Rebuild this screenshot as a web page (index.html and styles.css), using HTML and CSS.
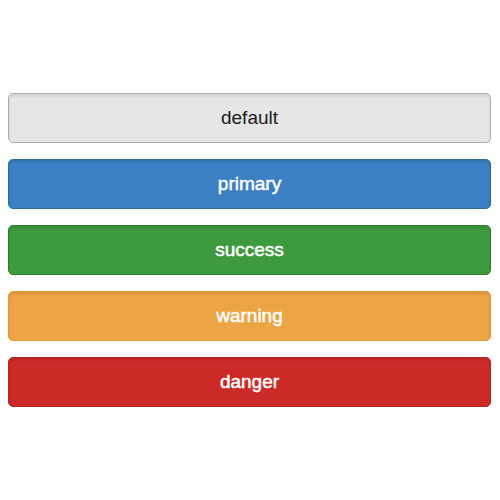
FILE: index.html
```html
<!DOCTYPE html>
<html lang="en">

<head>
    <meta charset="UTF-8">
    <meta name="viewport" content="width=device-width, initial-scale=1.0">
    <title>Buttons</title>
    <link rel="stylesheet" href="styles.css">
</head>

<body>

    <div id="button-list">
        <button class="btn btn-default">default</button>
        <button class="btn btn-primary">primary</button>
        <button class="btn btn-success">success</button>
        <button class="btn btn-warning">warning</button>
        <button class="btn btn-danger">danger</button>
    </div>

</body>

</html>
```

FILE: styles.css
```css
body {
    font-family: "Liberation Sans", Arial, sans-serif;
    background-color: #fff;
    margin: 0;
    padding: 0;
}

#button-list {
    display: flex;
    flex-direction: column;
    gap: 16px;
    padding: 93px 9px 0 8px;
}

.btn {
    height: 50px;
    width: 100%;
    border: 1px solid transparent;
    border-radius: 5px;
    font-family: inherit;
    font-size: 19px;
    color: #fff;
    cursor: pointer;
    box-shadow: inset 0 2px 3px rgba(0, 0, 0, 0.1);
    -webkit-text-stroke: 0.5px #fff;
}

.btn-default {
    background-color: #e6e6e6;
    border-color: #adadad;
    color: #1a1a1a;
    -webkit-text-stroke: 0;
}

.btn-primary {
    background-color: #3a80c3;
    border-color: #2e6da4;
}

.btn-success {
    background-color: #3e9a3e;
    border-color: #2f7d2f;
}

.btn-warning {
    background-color: #eda445;
    border-color: #e8982e;
}

.btn-danger {
    background-color: #cb2a27;
    border-color: #ac2925;
}
```
